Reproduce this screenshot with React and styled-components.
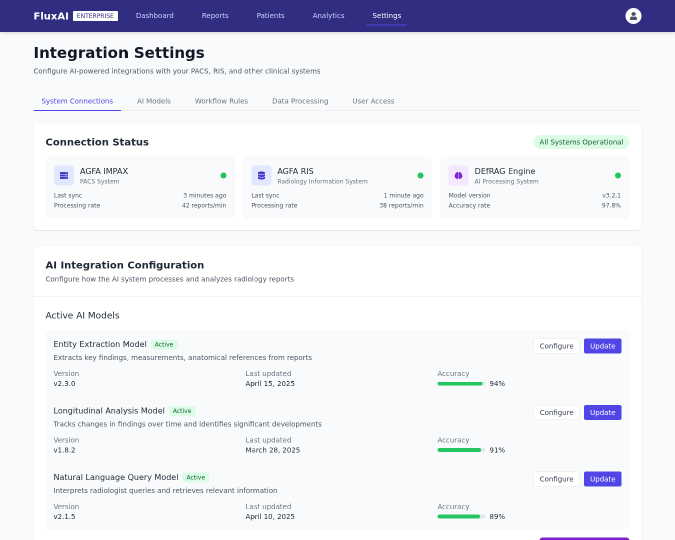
import React from 'react';
import styled, { createGlobalStyle } from 'styled-components';
import { FaServer, FaDatabase, FaBrain, FaUser } from 'react-icons/fa';

const Global = createGlobalStyle`
  html, body { margin: 0; padding: 0; background: #f9fafb; height: 540px; overflow: hidden; }
  body { font-family: "DejaVu Sans", sans-serif; color: #111827; }
  * { box-sizing: border-box; }
`;
/* The page is laid out at 1350x1080 and photographed at half size. */
const Stage = styled.div`
  width: 1350px; height: 1080px; overflow: hidden; background: #f9fafb;
  transform: scale(.5); transform-origin: 0 0; will-change: transform; filter: blur(.55px);
`;
const Header = styled.header`
  position: relative; height: 64px; background: #312e81; display: flex; align-items: center; justify-content: center;
  box-shadow: 0 4px 6px -1px rgba(0,0,0,.1), 0 2px 4px -1px rgba(0,0,0,.06);
`;
const Bar = styled.div`width: 1280px; padding: 0 32px; display: flex; align-items: center; justify-content: space-between;`;
const Left = styled.div`display: flex; align-items: center;`;
const Logo = styled.div`font-size: 20px; line-height: 28px; font-weight: 700; color: #fff;`;
const Badge = styled.span`
  margin-left: 8px; background: #fff; color: #312e81; font-size: 12px; line-height: 16px; padding: 2px 8px; border-radius: 2px;
`;
const Nav = styled.nav`display: flex; margin-left: 24px; gap: 32px;`;
const NavItem = styled.a`
  font-size: 14px; line-height: 20px; padding: 8px 12px; color: ${p => (p.$active ? '#fff' : '#c7d2fe')};
  border-bottom: 2px solid ${p => (p.$active ? '#4f46e5' : 'transparent')};
`;
const Avatar = styled.div`
  width: 32px; height: 32px; border-radius: 50%; background: #fff; display: flex; align-items: center; justify-content: center;
  color: #4b5563; font-size: 16px;
`;
const Main = styled.main`width: 1280px; margin: 0 auto; padding: 24px 32px 0;`;
const Title = styled.h1`margin: 0; font-size: 30px; line-height: 36px; font-weight: 700; color: #111827;`;
const Sub = styled.p`margin: ${p => p.$mt}px 0 0; font-size: 14px; line-height: 20px; color: #4b5563;`;
const Tabs = styled.div`display: flex; gap: 16px; margin-top: 32px; border-bottom: 1px solid #e5e7eb;`;
const Tab = styled.div`
  font-size: 14px; line-height: 20px; padding: 8px 16px; margin-bottom: -1px;
  color: ${p => (p.$active ? '#4f46e5' : '#6b7280')};
  border-bottom: 2px solid ${p => (p.$active ? '#4f46e5' : 'transparent')};
`;
const Card = styled.section`
  background: #fff; border-radius: 8px; box-shadow: 0 1px 3px rgba(0,0,0,.1), 0 1px 2px rgba(0,0,0,.06); margin-top: ${p => p.$mt}px;
`;
const StatusCard = styled(Card)`padding: 24px;`;
const Row = styled.div`display: flex; align-items: center; justify-content: space-between;`;
const H2 = styled.h2`margin: 0; font-size: 20px; line-height: 28px; font-weight: 600; color: #1f2937;`;
const Pill = styled.span`
  background: #dcfce7; color: #166534; font-size: 14px; line-height: 20px; padding: 4px 12px; border-radius: 14px;
`;
const Systems = styled.div`display: grid; grid-template-columns: repeat(3, 1fr); gap: 16px; margin-top: 16px;`;
const System = styled.div`
  background: #f9fafb; border: 1px solid #f3f4f6; border-radius: 8px; padding: 16px;
`;
const SysTop = styled.div`display: flex; align-items: center; margin-bottom: 12px;`;
const IconBox = styled.div`
  width: 40px; height: 40px; border-radius: 6px; background: ${p => p.$bg}; flex: none; margin-right: 12px;
  display: flex; align-items: center; justify-content: center; color: ${p => p.$fg}; font-size: 16px;
`;
const SysText = styled.div`flex: 1; min-width: 0;`;
const SysName = styled.div`font-size: 16px; line-height: 24px; color: #1f2937;`;
const SysKind = styled.div`font-size: 12px; line-height: 16px; color: #6b7280;`;
const Dot = styled.span`width: 12px; height: 12px; border-radius: 50%; background: #22c55e; flex: none;`;
const Stats = styled.div`display: flex; flex-direction: column; gap: 4px;`;
const Stat = styled.div`
  display: flex; justify-content: space-between; font-size: 12px; line-height: 16px; color: #4b5563;
`;
const ConfigHead = styled.div`padding: 24px; border-bottom: 1px solid #e5e7eb;`;
const ConfigBody = styled.div`padding: 24px;`;
const H3 = styled.h3`margin: 0; font-size: 18px; line-height: 28px; font-weight: 500; color: #1f2937;`;
const Models = styled.div`margin-top: 16px; background: #f9fafb; border-radius: 8px;`;
const Model = styled.div`
  padding: 16px; border-top: ${p => (p.$first ? '0' : '1px solid #f3f4f6')};
`;
const ModelTop = styled.div`display: flex; justify-content: space-between; align-items: flex-start;`;
const NameLine = styled.div`display: flex; align-items: center;`;
const ModelName = styled.span`font-size: 16px; line-height: 24px; color: #1f2937;`;
const Active = styled.span`
  margin-left: 8px; background: #dcfce7; color: #166534; font-size: 12px; line-height: 16px; padding: 2px 8px; border-radius: 4px;
`;
const Desc = styled.div`margin-top: 4px; font-size: 14px; line-height: 20px; color: #4b5563;`;
const Buttons = styled.div`display: flex; gap: 8px;`;
const Btn = styled.button`
  font-family: inherit; font-size: 14px; line-height: 20px; padding: 4px 12px; border-radius: 4px; margin: 0;
  ${p => p.$primary
    ? 'background: #4f46e5; color: #fff; border: 0;'
    : 'background: #fff; color: #374151; border: 1px solid #e5e7eb;'}
`;
const Meta = styled.div`display: grid; grid-template-columns: repeat(3, 1fr); margin-top: 12px; gap: 16px;`;
const Label = styled.div`font-size: 14px; line-height: 20px; color: #6b7280;`;
const Value = styled.div`font-size: 14px; line-height: 20px; color: #1f2937;`;
const BarLine = styled.div`display: flex; align-items: center; gap: 8px;`;
const Track = styled.div`width: 96px; height: 8px; background: #e5e7eb; border-radius: 4px; overflow: hidden;`;
const Fill = styled.div`height: 100%; background: #22c55e; border-radius: 4px;`;
const Foot = styled.div`display: flex; justify-content: flex-end; margin-top: 16px;`;
const Big = styled.button`
  width: 180px; height: 40px; padding: 0; background: #7e22ce; border: 0; border-radius: 6px;
`;

const systems = [
  { name: 'AGFA IMPAX', kind: 'PACS System', bg: '#e0e7ff', fg: '#4338ca', Icon: FaServer, stats: [['Last sync', '3 minutes ago'], ['Processing rate', '42 reports/min']] },
  { name: 'AGFA RIS', kind: 'Radiology Information System', bg: '#e0e7ff', fg: '#4338ca', Icon: FaDatabase, stats: [['Last sync', '1 minute ago'], ['Processing rate', '38 reports/min']] },
  { name: 'DEfRAG Engine', kind: 'AI Processing System', bg: '#f3e8ff', fg: '#7e22ce', Icon: FaBrain, stats: [['Model version', 'v3.2.1'], ['Accuracy rate', '97.8%']] },
];
const models = [
  { name: 'Entity Extraction Model', desc: 'Extracts key findings, measurements, anatomical references from reports', v: 'v2.3.0', d: 'April 15, 2025', a: 94 },
  { name: 'Longitudinal Analysis Model', desc: 'Tracks changes in findings over time and identifies significant developments', v: 'v1.8.2', d: 'March 28, 2025', a: 91 },
  { name: 'Natural Language Query Model', desc: 'Interprets radiologist queries and retrieves relevant information', v: 'v2.1.5', d: 'April 10, 2025', a: 89 },
];

export default function App() {
  return (
    <Stage>
      <Global />
      <Header>
        <Bar>
          <Left>
            <Logo>FluxAI</Logo>
            <Badge>ENTERPRISE</Badge>
            <Nav>
              {['Dashboard', 'Reports', 'Patients', 'Analytics'].map(n => <NavItem key={n}>{n}</NavItem>)}
              <NavItem $active>Settings</NavItem>
            </Nav>
          </Left>
          <Avatar><FaUser /></Avatar>
        </Bar>
      </Header>
      <Main>
        <Title>Integration Settings</Title>
        <Sub $mt={8}>Configure AI-powered integrations with your PACS, RIS, and other clinical systems</Sub>
        <Tabs>
          <Tab $active>System Connections</Tab>
          <Tab>AI Models</Tab>
          <Tab>Workflow Rules</Tab>
          <Tab>Data Processing</Tab>
          <Tab>User Access</Tab>
        </Tabs>
        <StatusCard $mt={24}>
          <Row>
            <H2>Connection Status</H2>
            <Pill>All Systems Operational</Pill>
          </Row>
          <Systems>
            {systems.map(s => (
              <System key={s.name}>
                <SysTop>
                  <IconBox $bg={s.bg} $fg={s.fg}><s.Icon /></IconBox>
                  <SysText>
                    <SysName>{s.name}</SysName>
                    <SysKind>{s.kind}</SysKind>
                  </SysText>
                  <Dot />
                </SysTop>
                <Stats>
                  {s.stats.map(([k, v]) => <Stat key={k}><span>{k}</span><span>{v}</span></Stat>)}
                </Stats>
              </System>
            ))}
          </Systems>
        </StatusCard>
        <Card $mt={32}>
          <ConfigHead>
            <H2>AI Integration Configuration</H2>
            <Sub $mt={4}>Configure how the AI system processes and analyzes radiology reports</Sub>
          </ConfigHead>
          <ConfigBody>
            <H3>Active AI Models</H3>
            <Models>
              {models.map((m, i) => (
                <Model key={m.name} $first={i === 0}>
                  <ModelTop>
                    <div>
                      <NameLine><ModelName>{m.name}</ModelName><Active>Active</Active></NameLine>
                      <Desc>{m.desc}</Desc>
                    </div>
                    <Buttons><Btn>Configure</Btn><Btn $primary>Update</Btn></Buttons>
                  </ModelTop>
                  <Meta>
                    <div><Label>Version</Label><Value>{m.v}</Value></div>
                    <div><Label>Last updated</Label><Value>{m.d}</Value></div>
                    <div>
                      <Label>Accuracy</Label>
                      <BarLine>
                        <Track><Fill style={{ width: `${m.a}%` }} /></Track>
                        <Value>{m.a}%</Value>
                      </BarLine>
                    </div>
                  </Meta>
                </Model>
              ))}
            </Models>
            <Foot><Big aria-label="Primary action" /></Foot>
          </ConfigBody>
        </Card>
      </Main>
    </Stage>
  );
}
